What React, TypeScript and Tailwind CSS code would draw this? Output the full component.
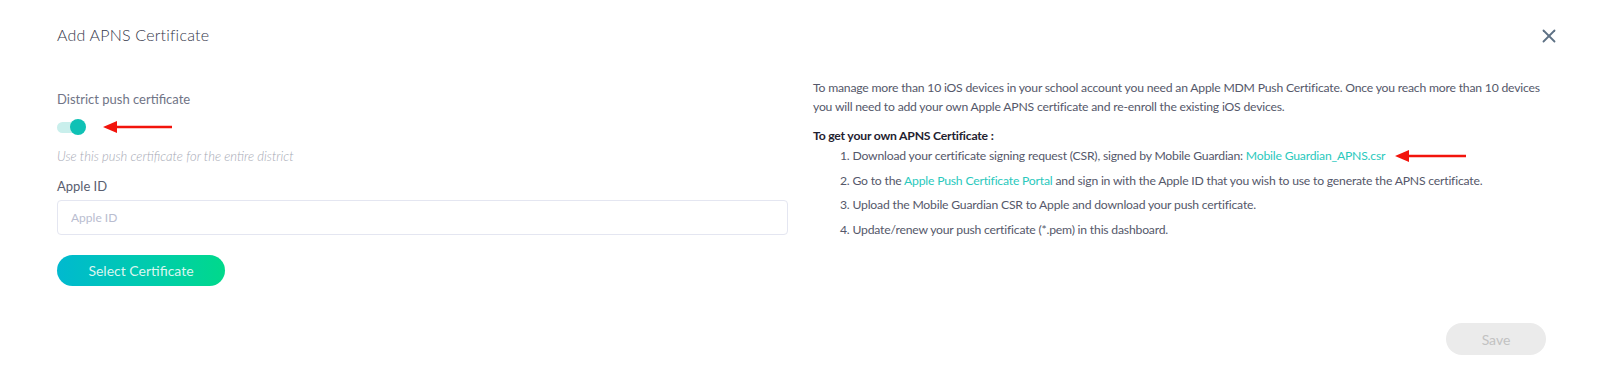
import { X } from "lucide-react";

const font = { fontFamily: "Lato, 'Open Sans', sans-serif" };

function RedArrow({ width }: { width: number }) {
  return (
    <svg width={width} height="16" viewBox={`0 0 ${width} 16`} className="shrink-0">
      <path d={`M0 8 L14 2 L14 6.8 L${width} 6.8 L${width} 9.2 L14 9.2 L14 14 Z`} fill="#f2140c" />
    </svg>
  );
}

export default function App() {
  return (
    <div className="relative h-[374px] w-[1600px] bg-white text-[#4a4d5a]" style={font}>
      {/* Header */}
      <div className="flex h-[66px] items-start justify-between pl-[57px] pr-[40px] pt-[23px]">
        <h1 className="text-[16px] font-light tracking-[0.2px] text-[#34374a]">Add APNS Certificate</h1>
        <button className="mt-[2px] text-[#5d7184]">
          <X size={22} strokeWidth={2} />
        </button>
      </div>

      <div className="flex pl-[57px] pr-[40px]">
        {/* Left column */}
        <div className="w-[731px] pt-[25px]">
          <div className="text-[13px] leading-[16px] text-[#707486]">District push certificate</div>

          <div className="mt-[12px] flex h-[16px] items-center gap-[17px]">
            <div className="relative h-[16px] w-[29px]">
              <div className="absolute left-0 top-[3px] h-[11px] w-[24px] rounded-full bg-[#c9efec]" />
              <div className="absolute right-0 top-0 h-[16px] w-[16px] rounded-full bg-[#0fc1b5]" />
            </div>
            <RedArrow width={69} />
          </div>

          <div className="mt-[13px] text-[13px] italic font-light leading-[16px] text-[#a6a9b5]">
            Use this push certificate for the entire district
          </div>

          <div className="mt-[14px] text-[13px] leading-[16px] text-[#5a5e70]">Apple ID</div>

          <input
            placeholder="Apple ID"
            className="mt-[6px] h-[35px] w-full rounded-[4px] border border-[#e4e6f1] px-[13px] text-[12px] outline-none placeholder:text-[#b9bdd0]"
            style={font}
          />

          <button className="mt-[20px] h-[31px] w-[168px] rounded-full bg-gradient-to-r from-[#02b9cf] to-[#02d98b] text-[14px] text-[#dbf6f0]">
            Select Certificate
          </button>
        </div>

        {/* Right column */}
        <div className="ml-[25px] flex-1 pt-[12px] text-[12.2px] tracking-[-0.2px] text-[#55586a]">
          <p className="leading-[19px]">
            To manage more than 10 iOS devices in your school account you need an Apple MDM Push Certificate. Once you reach more than 10 devices you will need to add your own Apple APNS certificate and re-enroll the existing iOS devices.
          </p>

          <div className="mt-[10px] font-bold leading-[19px] text-[#1f2230]">To get your own APNS Certificate :</div>

          <ol className="mt-[1px] flex flex-col gap-[5.5px] pl-[27px] leading-[19px]">
            <li className="flex items-center">
              <span>
                1. Download your certificate signing request (CSR), signed by Mobile Guardian:{" "}
                <a className="text-[#2ac9bd]">Mobile Guardian_APNS.csr</a>
              </span>
              <span className="ml-[10px] flex">
                <RedArrow width={71} />
              </span>
            </li>
            <li>
              2. Go to the <a className="text-[#2ac9bd]">Apple Push Certificate Portal</a> and sign in with the Apple ID that you wish to use to generate the APNS certificate.
            </li>
            <li>3. Upload the Mobile Guardian CSR to Apple and download your push certificate.</li>
            <li>4. Update/renew your push certificate (*.pem) in this dashboard.</li>
          </ol>
        </div>
      </div>

      {/* Footer */}
      <div className="absolute bottom-[19px] right-[54px]">
        <button className="h-[32px] w-[100px] rounded-full bg-[#ebebeb] text-[14px] text-[#c2c2c2]">Save</button>
      </div>
    </div>
  );
}
